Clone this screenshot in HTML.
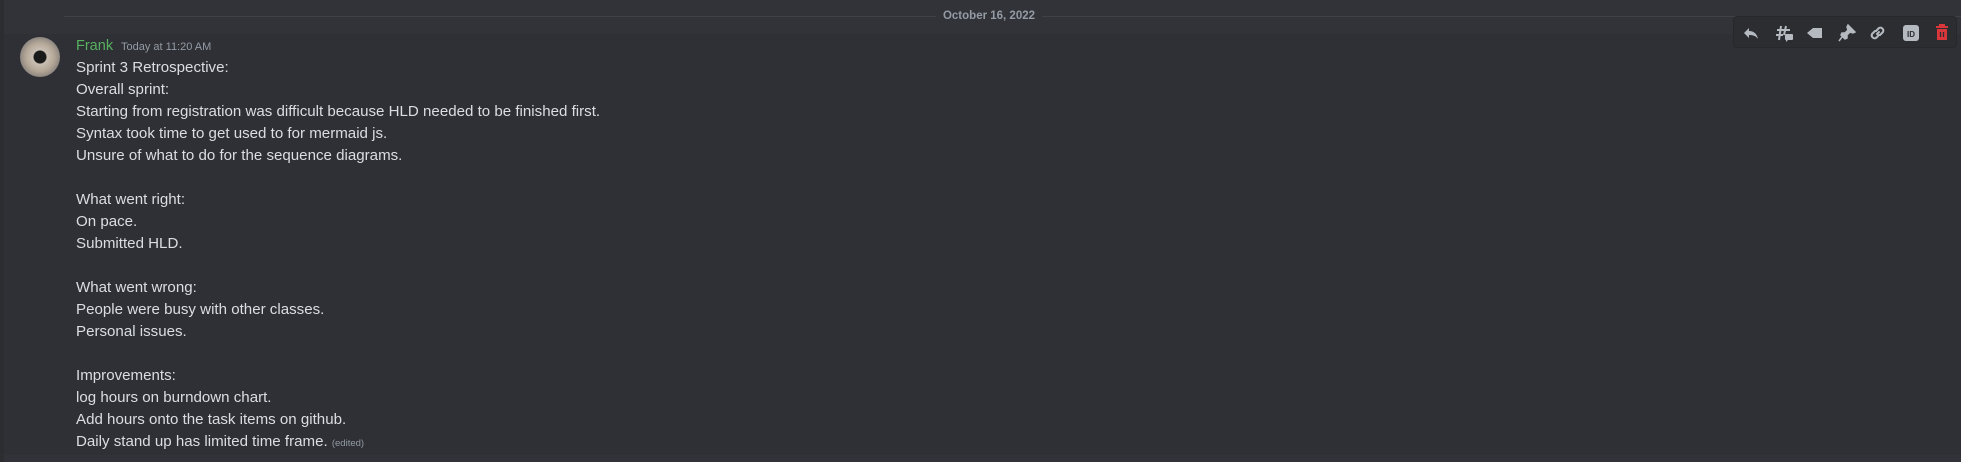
<!DOCTYPE html>
<html><head><meta charset="utf-8"><style>
html,body{margin:0;padding:0;width:1961px;height:462px;overflow:hidden;background:#313338;font-family:"Liberation Sans",sans-serif;}
.strip{position:absolute;left:0;top:0;width:4px;height:462px;background:#2b2d31}
.divline{position:absolute;left:64px;right:0;top:16px;height:1px;background:#3f4147}
.date{position:absolute;left:936px;top:8px;width:106px;text-align:center;background:#313338;color:#949ba4;font-size:11.5px;font-weight:bold;line-height:16px}
.msg{position:absolute;left:4px;right:0;top:34px;height:421px;background:#2e3035}
.av{position:absolute;left:20px;top:37px;width:40px;height:40px;border-radius:50%;background:radial-gradient(circle at 50% 50%,#1a1a1a 0 6px,#c9bfb4 7px,#b5a898 14px,#8d8680 20px)}
.name{position:absolute;left:76px;top:36px;color:#57b15f;font-size:14.5px;line-height:20px}
.ts{position:absolute;left:121px;top:39px;color:#949ba4;font-size:11px;line-height:16px}
.body{position:absolute;left:76px;top:57px;color:#dbdee1;font-size:15.1px;line-height:22px;white-space:pre}
.ed{font-size:9.5px;color:#949ba4}
.tb{position:absolute;left:1733px;top:16px;width:224px;height:32px;background:#2b2d31;border:1px solid #26282c;border-radius:4px;box-sizing:border-box}
.tb svg{position:absolute;top:6px}
</style></head><body>
<div class="strip"></div>
<div class="divline"></div>
<div class="date">October 16, 2022</div>
<div class="msg"></div>
<div class="av"></div>
<div class="name">Frank</div>
<div class="ts">Today at 11:20 AM</div>
<div class="body">Sprint 3 Retrospective:
Overall sprint:
Starting from registration was difficult because HLD needed to be finished first.
Syntax took time to get used to for mermaid js.
Unsure of what to do for the sequence diagrams.

What went right:
On pace.
Submitted HLD.

What went wrong:
People were busy with other classes.
Personal issues.

Improvements:
log hours on burndown chart.
Add hours onto the task items on github.
Daily stand up has limited time frame. <span class="ed">(edited)</span></div>
<div class="tb">
<svg style="left:7px" width="20" height="20" viewBox="0 0 20 20"><path d="M8 5 L3 10 L8 15 V12 C12 12 15 13 17 16 C16 11 13 8 8 8 Z" fill="#b5bac1"/></svg>
<svg style="left:40px" width="20" height="20" viewBox="0 0 20 20"><path d="M7 3 L5 17 M12 3 L10 12 M3 7 H16 M2 12 H9" stroke="#b5bac1" stroke-width="2" fill="none"/><rect x="11" y="11" width="8" height="6" rx="1" fill="#b5bac1"/><path d="M12 17 L12 19 L14 17Z" fill="#b5bac1"/></svg>
<svg style="left:71px" width="20" height="20" viewBox="0 0 20 20"><path d="M2 10 L8 5 H17 V15 H8 Z" fill="#b5bac1"/></svg>
<svg style="left:103px" width="20" height="20" viewBox="0 0 20 20"><path d="M11 2 L18 9 L16 10 L13 9 L10 12 L10 15 L8 16 L4 12 L5 10 L8 10 L11 7 L10 4 Z M5 14 L2 18" fill="#b5bac1" stroke="#b5bac1" stroke-width="1.5"/></svg>
<svg style="left:134px" width="20" height="20" viewBox="0 0 20 20"><path d="M9 11 L11 9 M8 8 L11 5 A3 3 0 0 1 15 9 L12 12 M11 12 L8 15 A3 3 0 0 1 4 11 L7 8" stroke="#b5bac1" stroke-width="2" fill="none" stroke-linecap="round"/></svg>
<svg style="left:167px" width="20" height="20" viewBox="0 0 20 20"><rect x="2" y="2" width="16" height="16" rx="3" fill="#b5bac1"/><text x="10" y="14" font-size="8" font-weight="bold" font-family="Liberation Sans" fill="#2b2d31" text-anchor="middle">ID</text></svg>
<svg style="left:198px" width="20" height="20" viewBox="0 0 20 20"><path d="M4 4 H16 M8 4 V2 H12 V4" stroke="#da373c" stroke-width="2" fill="none"/><path d="M5 6 H15 V17 H5 Z" fill="#da373c"/><path d="M8.5 9 V14 M11.5 9 V14" stroke="#2b2d31" stroke-width="1.3"/></svg>
</div>
</body></html>
